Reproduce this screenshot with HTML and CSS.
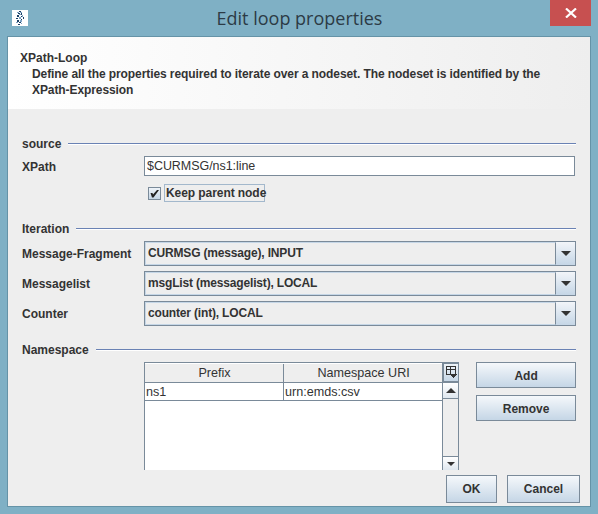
FILE: index.html
```html
<!DOCTYPE html>
<html lang="en">
  <head>
    <meta charset="UTF-8" />
    <title>Edit loop properties</title>
    <link rel="stylesheet" href="styles.css">
  </head>
  <body>
    <div class="titlebar">
      <svg class="app-icon" width="16" height="16" viewBox="0 0 16 16" shape-rendering="crispEdges">
        <rect width="16" height="16" fill="#fff" />
        <g fill="#1b3f66">
          <rect x="7" y="1" width="2" height="1" />
          <rect x="6" y="3" width="2" height="1" />
          <rect x="9" y="3" width="1" height="2" />
          <rect x="5" y="5" width="2" height="2" />
          <rect x="9" y="6" width="1" height="1" />
          <rect x="11" y="7" width="1" height="2" />
          <rect x="4" y="8" width="2" height="1" />
          <rect x="9" y="9" width="1" height="1" />
          <rect x="5" y="10" width="2" height="2" />
          <rect x="7" y="12" width="2" height="1" />
          <rect x="6" y="14" width="2" height="1" />
        </g>
        <g fill="#7fa3c4">
          <rect x="5" y="2" width="2" height="1" />
          <rect x="8" y="2" width="2" height="1" />
          <rect x="7" y="4" width="2" height="1" />
          <rect x="7" y="7" width="2" height="2" />
          <rect x="10" y="5" width="1" height="2" />
          <rect x="8" y="10" width="2" height="2" />
          <rect x="4" y="12" width="2" height="1" />
          <rect x="9" y="13" width="1" height="1" />
        </g>
      </svg>
      <div class="title">Edit loop properties</div>
      <div class="close">
        <svg width="12" height="10" viewBox="0 0 12 10">
          <path d="M1 0.5 L11 9.5 M11 0.5 L1 9.5" stroke="#fff" stroke-width="2.2" fill="none" />
        </svg>
      </div>
    </div>

    <div class="client">
      <div class="banner">
        <div>XPath-Loop</div>
        <div class="banner-text">Define all the properties required to iterate over a nodeset. The nodeset is identified by the</div>
        <div class="banner-text">XPath-Expression</div>
      </div>

      <div class="form">
        <div class="sec-head"><span>source</span><i></i></div>
        <div class="row row-xpath">
          <label>XPath</label>
          <div class="input">$CURMSG/ns1:line</div>
        </div>
        <div class="check-row">
          <span class="check">
            <svg width="9" height="9" viewBox="0 0 9 9">
              <path d="M0.5 4 L2.5 4 L3 5.5 L7 1 L9 1 L3.5 8.5 L2 8.5 Z" fill="#222" />
            </svg>
          </span>
          <span class="check-label">Keep parent node</span>
        </div>

        <div class="sec-head sec-iter"><span>Iteration</span><i></i></div>
        <div class="row row-combo">
          <label>Message-Fragment</label>
          <div class="combo">
            <div class="combo-value">CURMSG (message), INPUT</div>
            <div class="combo-btn"><b class="arrow-down"></b></div>
          </div>
        </div>
        <div class="row row-combo">
          <label>Messagelist</label>
          <div class="combo">
            <div class="combo-value">msgList (messagelist), LOCAL</div>
            <div class="combo-btn"><b class="arrow-down"></b></div>
          </div>
        </div>
        <div class="row row-combo">
          <label>Counter</label>
          <div class="combo">
            <div class="combo-value">counter (int), LOCAL</div>
            <div class="combo-btn"><b class="arrow-down"></b></div>
          </div>
        </div>

        <div class="sec-head sec-ns"><span>Namespace</span><i></i></div>
        <div class="ns-body">
          <div class="table-pane">
            <div class="table-main">
              <div class="tr th">
                <div class="td col-prefix">Prefix</div>
                <div class="td col-uri">Namespace URI</div>
              </div>
              <div class="tr">
                <div class="td col-prefix">ns1</div>
                <div class="td col-uri">urn:emds:csv</div>
              </div>
            </div>
            <div class="scroll">
              <div class="corner">
                <svg width="11" height="13" viewBox="0 0 11 13" shape-rendering="crispEdges">
                  <path d="M0.5 0.5 H9.5 V8.5 H0.5 Z M0.5 3.5 H9.5 M4.5 0.5 V8.5" stroke="#333" fill="none" />
                  <path d="M4 8 H11 V9 H10 V10 H9 V11 H8 V12 H7 V11 H6 V10 H5 V9 H4 Z" fill="#333" />
                </svg>
              </div>
              <div class="scroll-btn"><b class="arrow-up"></b></div>
              <div class="scroll-track"></div>
              <div class="scroll-btn"><b class="arrow-down small"></b></div>
            </div>
          </div>
          <div class="ns-buttons">
            <div class="btn">Add</div>
            <div class="btn">Remove</div>
          </div>
        </div>

        <div class="footer">
          <div class="btn btn-ok">OK</div>
          <div class="btn btn-cancel">Cancel</div>
        </div>
      </div>
    </div>
  </body>
</html>
```

FILE: styles.css
```css
* {
  margin: 0;
  padding: 0;
  box-sizing: border-box;
}
body {
  width: 598px;
  height: 514px;
  overflow: hidden;
  background: #7fb0c5;
  font-family: "Liberation Sans", Arial, sans-serif;
  font-size: 12px;
  color: #333333;
}
.titlebar {
  height: 36px;
  display: flex;
  align-items: flex-start;
  padding-left: 12px;
}
.app-icon {
  margin-top: 10px;
  flex: none;
}
.title {
  flex: 1;
  text-align: center;
  font-family: "Open Sans", sans-serif;
  font-size: 18px;
  line-height: 24px;
  padding: 6px 0 0 21px;
  color: #2c3b46;
}
.close {
  width: 41px;
  height: 26px;
  margin-right: 7px;
  background: #c75050;
  display: flex;
  align-items: center;
  justify-content: center;
}
.client {
  width: 584px;
  height: 471px;
  margin-left: 7px;
  border: 1px solid #6593a7;
  background: #eeeeee;
}
.banner {
  height: 72px;
  padding: 13px 0 0 12px;
  background: linear-gradient(to right, #ffffff, #eeeeee);
  font-weight: bold;
  line-height: 16px;
}
.banner-text {
  padding-left: 12px;
  letter-spacing: -0.085px;
}
.form {
  padding: 27px 14px 0;
}
.sec-head {
  height: 16px;
  display: flex;
  align-items: center;
  font-weight: bold;
  line-height: 16px;
}
.sec-head i {
  flex: 1;
  margin-left: 7px;
  height: 2px;
  border-top: 1px solid #6a82b4;
  border-bottom: 1px solid #ffffff;
}
.row {
  display: grid;
  grid-template-columns: 122px 1fr;
  align-items: center;
  font-weight: bold;
}
.row-xpath {
  margin-top: 4px;
}
.row-xpath label {
  padding-top: 1px;
}
.input {
  height: 20px;
  margin-right: 1px;
  padding-left: 2px;
  border: 1px solid #7a8a99;
  background: #ffffff;
  font-weight: normal;
  font-size: 12.5px;
  letter-spacing: -0.05px;
  line-height: 19px;
}
.check-row {
  display: flex;
  align-items: center;
  margin: 8px 0 0 126px;
  height: 18px;
}
.check {
  width: 13px;
  height: 13px;
  border: 1px solid #7a8a99;
  background: linear-gradient(#eef3f8, #c5d6e6);
  display: flex;
  align-items: center;
  justify-content: center;
}
.check-label {
  margin-left: 3px;
  height: 18px;
  width: 101px;
  padding-left: 1px;
  border: 1px solid #a3b8cc;
  font-weight: bold;
  letter-spacing: -0.07px;
  line-height: 16px;
  white-space: nowrap;
}
.sec-iter {
  margin-top: 19px;
}
.row-combo {
  height: 25px;
  margin-top: 5px;
}
.sec-iter + .row-combo {
  margin-top: 4px;
}
.combo {
  height: 25px;
  display: flex;
  border: 1px solid #7a8a99;
}
.combo-value {
  flex: 1;
  padding-left: 2px;
  border: 1px solid;
  border-color: #c5d6e6 #eeeeee #c5d6e6 #c5d6e6;
  border-right: 1px solid #7a8a99;
  letter-spacing: -0.17px;
  line-height: 21px;
}
.combo-btn {
  width: 19px;
  background: linear-gradient(#f2f5f9, #c5d6e6);
  display: flex;
  align-items: center;
  justify-content: center;
}
.arrow-down {
  width: 0;
  height: 0;
  border-left: 5px solid transparent;
  border-right: 5px solid transparent;
  border-top: 5px solid #333333;
}
.arrow-down.small {
  border-left-width: 4px;
  border-right-width: 4px;
  border-top-width: 4px;
}
.arrow-up {
  width: 0;
  height: 0;
  border-left: 5px solid transparent;
  border-right: 5px solid transparent;
  border-bottom: 5px solid #333333;
}
.sec-ns {
  margin-top: 16px;
}
.ns-body {
  display: flex;
  margin-top: 4px;
}
.table-pane {
  width: 316px;
  height: 108px;
  margin-left: 122px;
  display: flex;
  border: 1px solid #7a8a99;
  border-bottom: 0;
  background: #ffffff;
}
.table-main {
  flex: 1;
  border-right: 1px solid #7a8a99;
}
.tr {
  display: flex;
  height: 18px;
  border-bottom: 1px solid #7a8a99;
  line-height: 18px;
  font-size: 12.6px;
}
.th {
  height: 20px;
  line-height: 19px;
  background: #eeeeee;
  text-align: center;
  border-top: 1px solid #ffffff;
}
.td {
  padding-left: 1px;
  white-space: nowrap;
}
.col-prefix {
  width: 139px;
  border-right: 1px solid #7a8a99;
}
.col-uri {
  flex: 1;
}
.scroll {
  width: 15px;
  background: #eeeeee;
  display: flex;
  flex-direction: column;
}
.corner {
  height: 20px;
  border-bottom: 2px solid #7a8a99;
  border-left: 1px solid #7a8a99;
  border-top: 1px solid #7a8a99;
  background: linear-gradient(#eef3f8, #c5d6e6);
  display: flex;
  justify-content: center;
  padding-top: 2px;
}
.scroll-btn {
  height: 16px;
  background: linear-gradient(#ffffff, #dfe7ef);
  border-bottom: 1px solid #7a8a99;
  display: flex;
  align-items: center;
  justify-content: center;
}
.scroll-track {
  height: 58px;
  background: #eeeeee;
}
.scroll-track + .scroll-btn {
  height: 14px;
  border-top: 1px solid #7a8a99;
  border-bottom: 0;
}
.ns-buttons {
  margin-left: 17px;
  width: 100px;
  display: flex;
  flex-direction: column;
  gap: 7px;
}
.btn {
  height: 26px;
  border: 1px solid #7a8a99;
  background: linear-gradient(#f5f8fb, #c5d6e6);
  font-weight: bold;
  text-align: center;
  line-height: 26px;
}
.footer {
  display: flex;
  justify-content: flex-end;
  gap: 10px;
  margin: 5px -4px 0 0;
}
.footer .btn {
  height: 28px;
  line-height: 26px;
}
.btn-ok {
  width: 51px;
}
.btn-cancel {
  width: 73px;
}
```
